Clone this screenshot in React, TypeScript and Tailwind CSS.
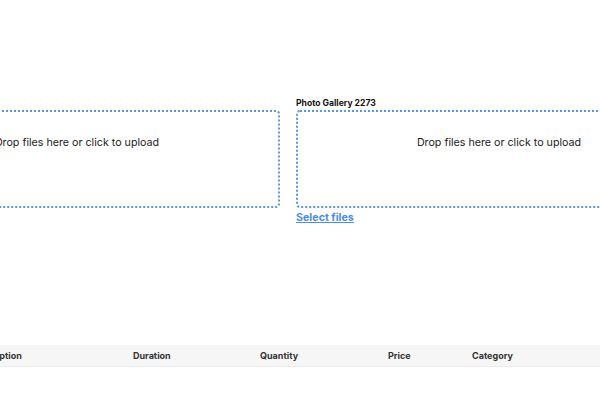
const font = { fontFamily: 'Inter, "Open Sans", "Liberation Sans", sans-serif' };

function Dropzone({ label, showLink }: { label: string; showLink?: boolean }) {
  return (
    <div className="w-[406px] shrink-0">
      <div className="mb-[1px] h-[12px] text-[8.6px] font-bold leading-[12px] text-[#111]">{label}</div>
      <div className="flex h-[98px] items-start justify-center rounded-[4px] border-2 border-dotted border-[#5b97dd] pt-[24px]">
        <span className="text-[10.7px] leading-[14px] text-[#222]">Drop files here or click to upload</span>
      </div>
      {showLink && (
        <a href="#" className="block w-fit pt-[1px] text-[10.7px] font-bold leading-[18px] text-[#4a8ee0] underline">
          Select files
        </a>
      )}
    </div>
  );
}

export default function App() {
  const columns = [
    { name: "Title", w: "w-[81px]" },
    { name: "Description", w: "w-[166px] pl-[4px]" },
    { name: "Duration", w: "w-[127px]" },
    { name: "Quantity", w: "w-[128px]" },
    { name: "Price", w: "w-[84px]" },
    { name: "Category", w: "w-[160px]" },
  ];

  return (
    <div className="h-[400px] w-[600px] overflow-hidden bg-white" style={font}>
      <div className="-ml-[126px] w-[900px] pt-[97px]">
        <div className="flex gap-4">
          <Dropzone label="Cover Image 1942" />
          <Dropzone label="Photo Gallery 2273" showLink />
        </div>

        <div className="mt-[118px] flex h-[22px] items-center border-b border-[#ececec] bg-[#f6f6f6] pl-[12px] text-[9px] font-bold text-[#333]">
          {columns.map((c) => (
            <div key={c.name} className={c.w}>
              {c.name}
            </div>
          ))}
        </div>
      </div>
    </div>
  );
}
